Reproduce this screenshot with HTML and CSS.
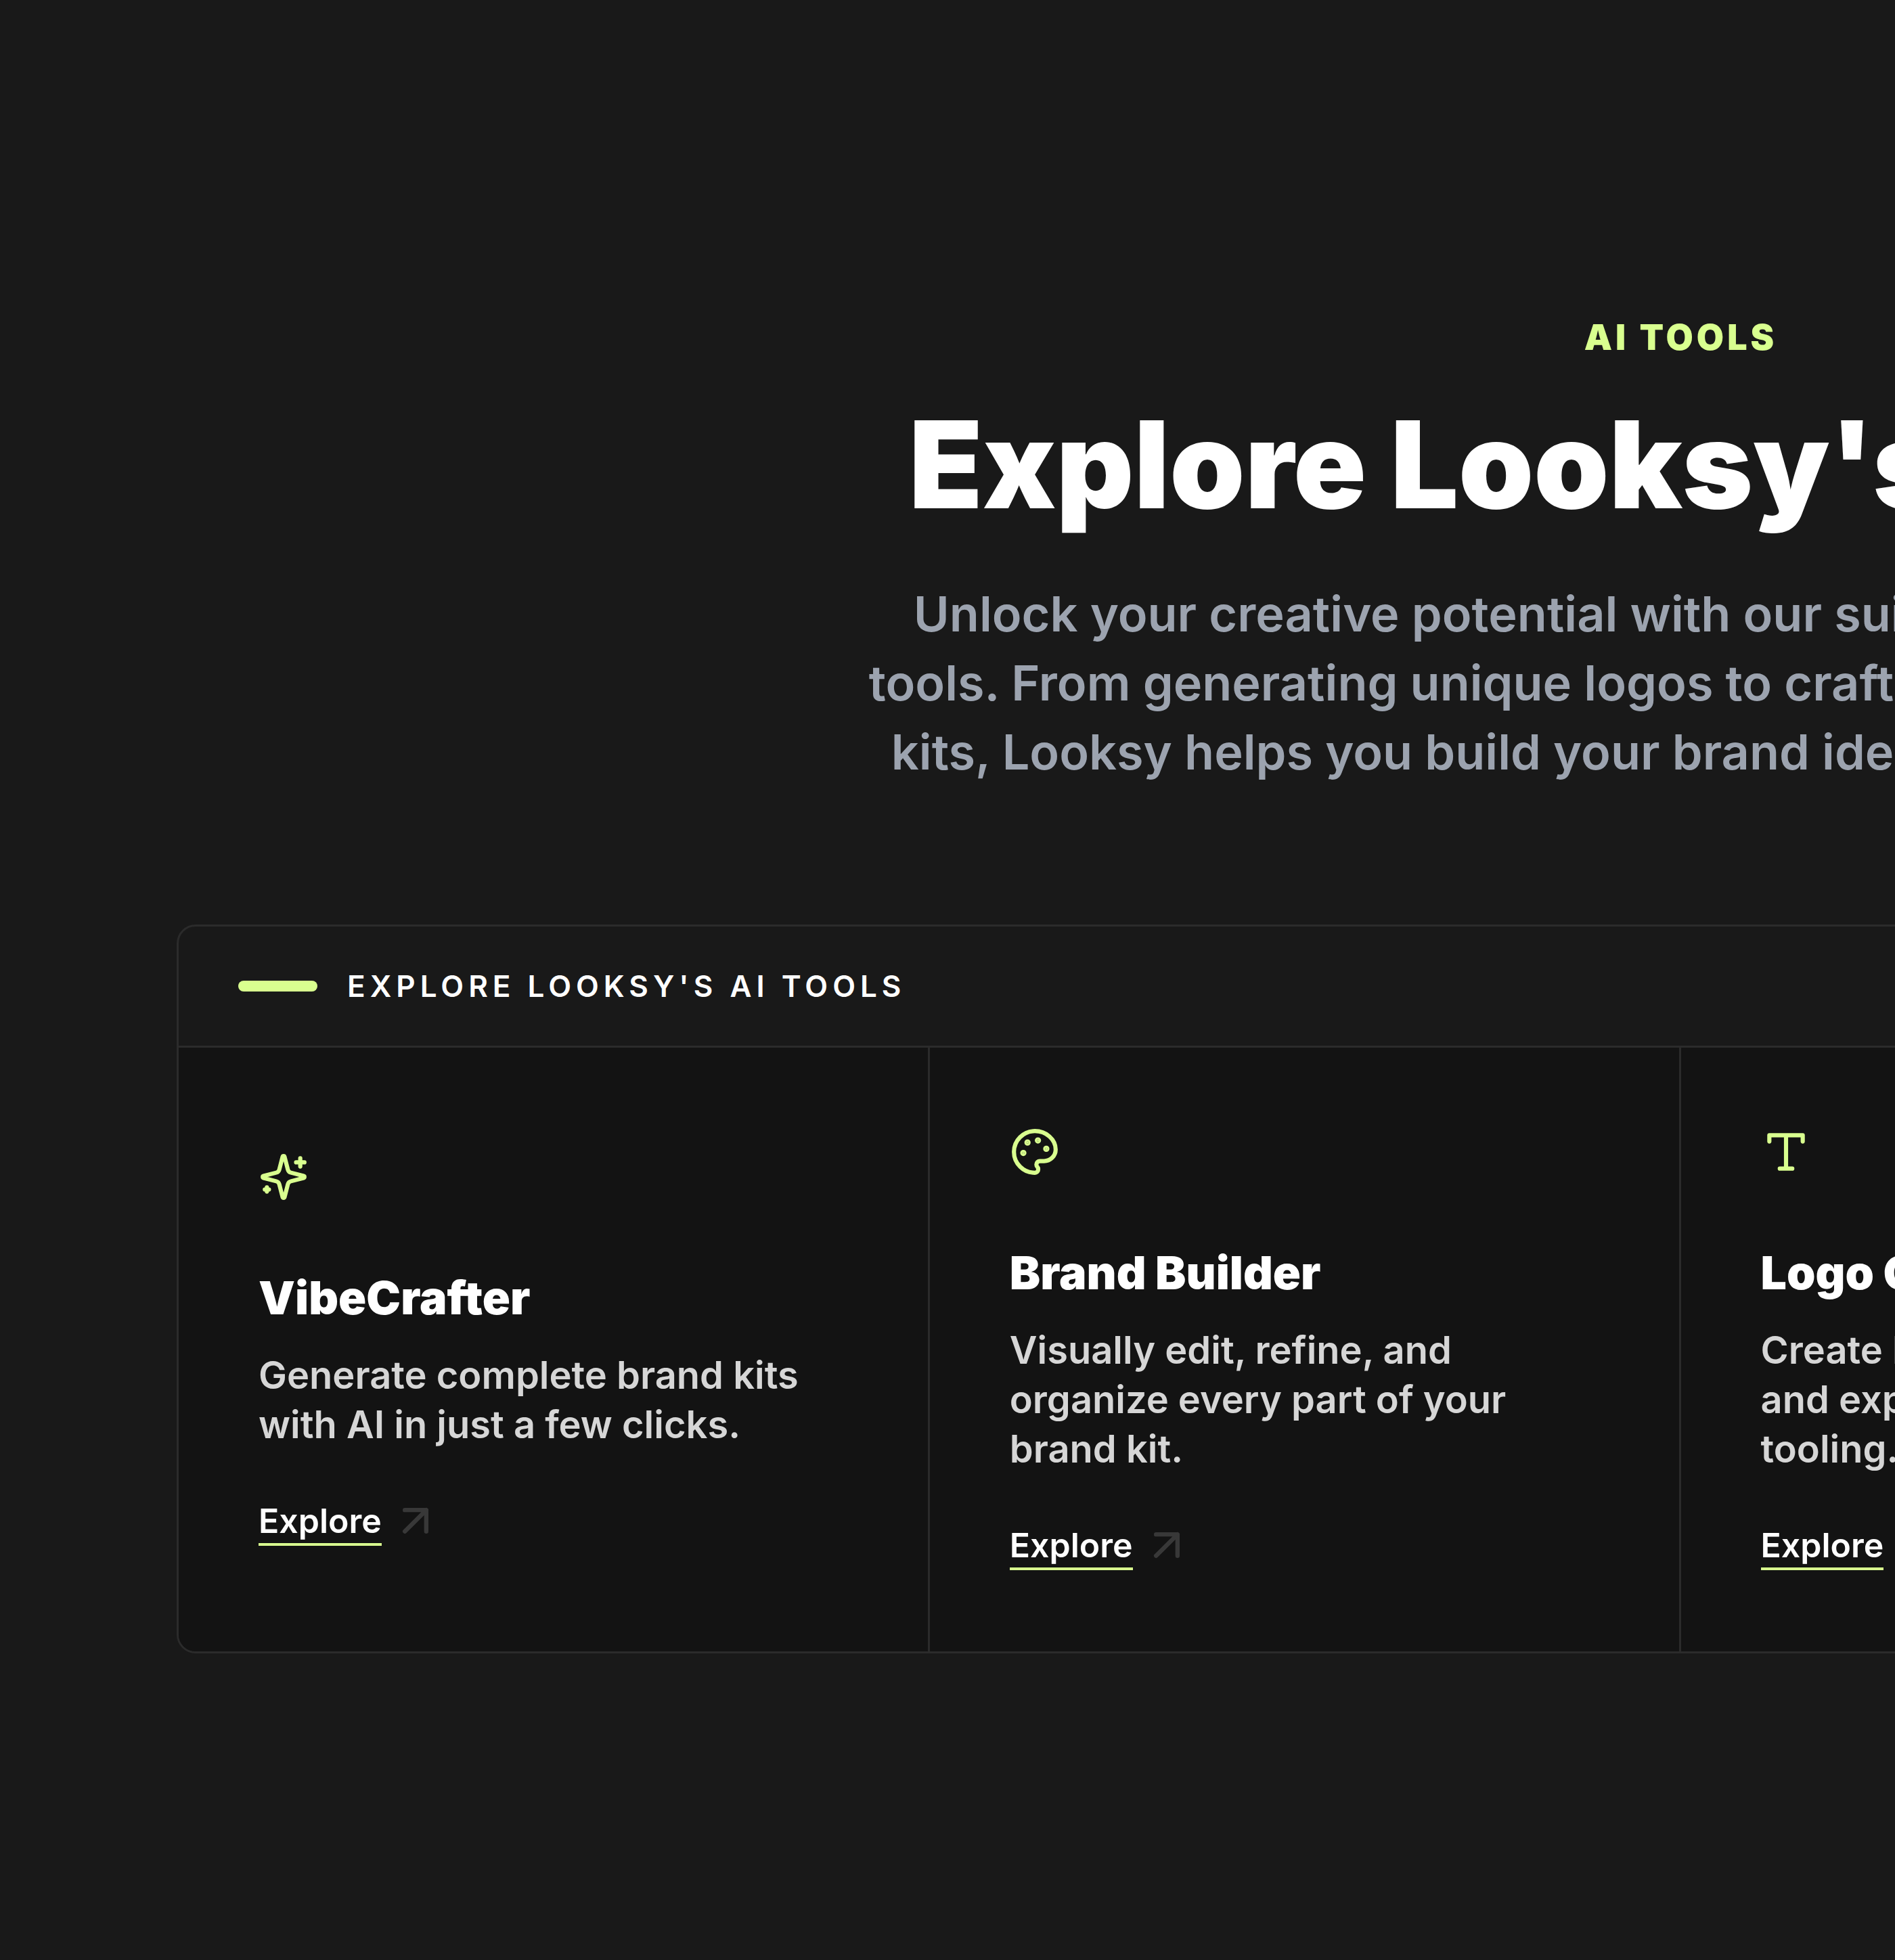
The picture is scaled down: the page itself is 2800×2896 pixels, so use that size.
FILE: index.html
```html
<!DOCTYPE html>
<html lang="en">

<head>
    <meta charset="utf-8">
    <meta name="viewport" content="width=device-width, initial-scale=1">
    <title>Looksy AI Tools</title>
    <link rel="stylesheet" href="styles.css">
</head>

<body>
    <section class="tools">
        <div class="intro">
            <p class="eyebrow">AI TOOLS</p>
            <h1>Explore Looksy's AI Tools</h1>
            <p class="lead">Unlock your creative potential with our suite of smart AI-powered<br>
                tools. From generating unique logos to crafting comprehensive brand<br>
                kits, Looksy helps you build your brand identity effortlessly with AI.</p>
        </div>

        <div class="panel">
            <div class="panel-header">
                <span class="dash"></span>
                <h2>EXPLORE LOOKSY'S AI TOOLS</h2>
            </div>

            <div class="cards">
                <article class="card">
                    <svg class="icon" viewBox="0 0 24 24">
                        <path d="M9.937 15.5A2 2 0 0 0 8.5 14.063l-6.135-1.582a.5.5 0 0 1 0-.962L8.5 9.936A2 2 0 0 0 9.937 8.5l1.582-6.135a.5.5 0 0 1 .963 0L14.063 8.5A2 2 0 0 0 15.5 9.937l6.135 1.581a.5.5 0 0 1 0 .964L15.5 14.063a2 2 0 0 0-1.437 1.437l-1.582 6.135a.5.5 0 0 1-.963 0z" />
                        <path d="M20 3v4M22 5h-4M4 17v2M5 18H3" />
                    </svg>
                    <h3>VibeCrafter</h3>
                    <p>Generate complete brand kits<br>with AI in just a few clicks.</p>
                    <a class="explore" href="#"><span>Explore</span>
                        <svg class="arrow" viewBox="0 0 24 24"><path d="M7 7h10v10M7 17 17 7" /></svg>
                    </a>
                </article>

                <article class="card">
                    <svg class="icon" viewBox="0 0 24 24">
                        <circle class="dot" cx="13.5" cy="6.5" r=".5" />
                        <circle class="dot" cx="17.5" cy="10.5" r=".5" />
                        <circle class="dot" cx="8.5" cy="7.5" r=".5" />
                        <circle class="dot" cx="6.5" cy="12.5" r=".5" />
                        <path d="M12 2C6.5 2 2 6.5 2 12s4.500 10 10 10c.926 0 1.648-.746 1.648-1.688 0-.437-.180-.835-.437-1.125-.290-.289-.438-.652-.438-1.125a1.640 1.640 0 0 1 1.668-1.668h1.996c3.051 0 5.555-2.503 5.555-5.554C21.965 6.012 17.461 2 12 2z" />
                    </svg>
                    <h3>Brand Builder</h3>
                    <p>Visually edit, refine, and<br>organize every part of your<br>brand kit.</p>
                    <a class="explore" href="#"><span>Explore</span>
                        <svg class="arrow" viewBox="0 0 24 24"><path d="M7 7h10v10M7 17 17 7" /></svg>
                    </a>
                </article>

                <article class="card">
                    <svg class="icon" viewBox="0 0 24 24">
                        <path d="M4 7V4h16v3M9 20h6M12 4v16" />
                    </svg>
                    <h3>Logo Generator</h3>
                    <p>Create logos, iterate<br>and export with pro<br>tooling.</p>
                    <a class="explore" href="#"><span>Explore</span>
                        <svg class="arrow" viewBox="0 0 24 24"><path d="M7 7h10v10M7 17 17 7" /></svg>
                    </a>
                </article>

                <article class="card"></article>
            </div>
        </div>
    </section>
</body>

</html>
```

FILE: styles.css
```css
* {
    box-sizing: border-box;
}

body {
    margin: 0;
    background-color: #191919;
    color: #ffffff;
    font-family: Inter, "Liberation Sans", sans-serif;
    overflow: hidden;
}

h1,
h2,
h3,
p {
    margin: 0;
}

/* the section runs wider than the window and is cut off on the right */
.tools {
    width: 177.5%;
    padding: 463px 264px 456px 261px;
}

.intro {
    text-align: center;
    white-space: nowrap;
    margin-bottom: 204px;
}

.eyebrow {
    color: #d9ff8f;
    font-size: 52px;
    font-weight: 900;
    line-height: 72px;
    letter-spacing: 5px;
    margin-bottom: 52px;
}

h1 {
    font-size: 178px;
    font-weight: 900;
    line-height: 200px;
    margin-bottom: 69px;
}

.lead {
    color: #9ca3af;
    font-size: 72px;
    font-weight: 600;
    line-height: 102px;
}

.panel {
    border: 3px solid #2b2b2b;
    border-radius: 28px;
    overflow: hidden;
}

.panel-header {
    display: flex;
    align-items: center;
    gap: 44px;
    height: 179px;
    padding: 0 88px;
    border-bottom: 3px solid #2b2b2b;
}

.dash {
    width: 117px;
    height: 16px;
    border-radius: 8px;
    background-color: #d9ff8f;
}

h2 {
    font-size: 44px;
    font-weight: 600;
    line-height: 64px;
    letter-spacing: 7px;
}

.cards {
    display: grid;
    grid-template-columns: repeat(4, 1fr);
    background-color: #131313;
}

.card {
    display: flex;
    flex-direction: column;
    justify-content: center;
    align-items: flex-start;
    padding: 117px 118px 120px;
    border-right: 3px solid #2b2b2b;
    white-space: nowrap;
}

.card:last-child {
    border-right: none;
}

.icon,
.arrow {
    fill: none;
    stroke: #d9ff8f;
    stroke-width: 2;
    stroke-linecap: round;
    stroke-linejoin: round;
}

.icon {
    width: 74px;
    height: 74px;
    margin-bottom: 97px;
}

.dot {
    fill: #d9ff8f;
}

h3 {
    font-size: 68px;
    font-weight: 900;
    line-height: 88px;
    margin-bottom: 35px;
}

.card p {
    color: #d6d6d6;
    font-size: 56px;
    font-weight: 600;
    line-height: 73px;
    margin-bottom: 75px;
}

.explore {
    display: flex;
    align-items: flex-start;
    gap: 12px;
    color: #ffffff;
    font-size: 50px;
    font-weight: 600;
    line-height: 60px;
    text-decoration: none;
}

.explore span {
    padding-bottom: 3px;
    border-bottom: 4px solid #d9ff8f;
}

.arrow {
    width: 76px;
    height: 76px;
    margin: -8px 0;
    stroke: #383838;
}
```
